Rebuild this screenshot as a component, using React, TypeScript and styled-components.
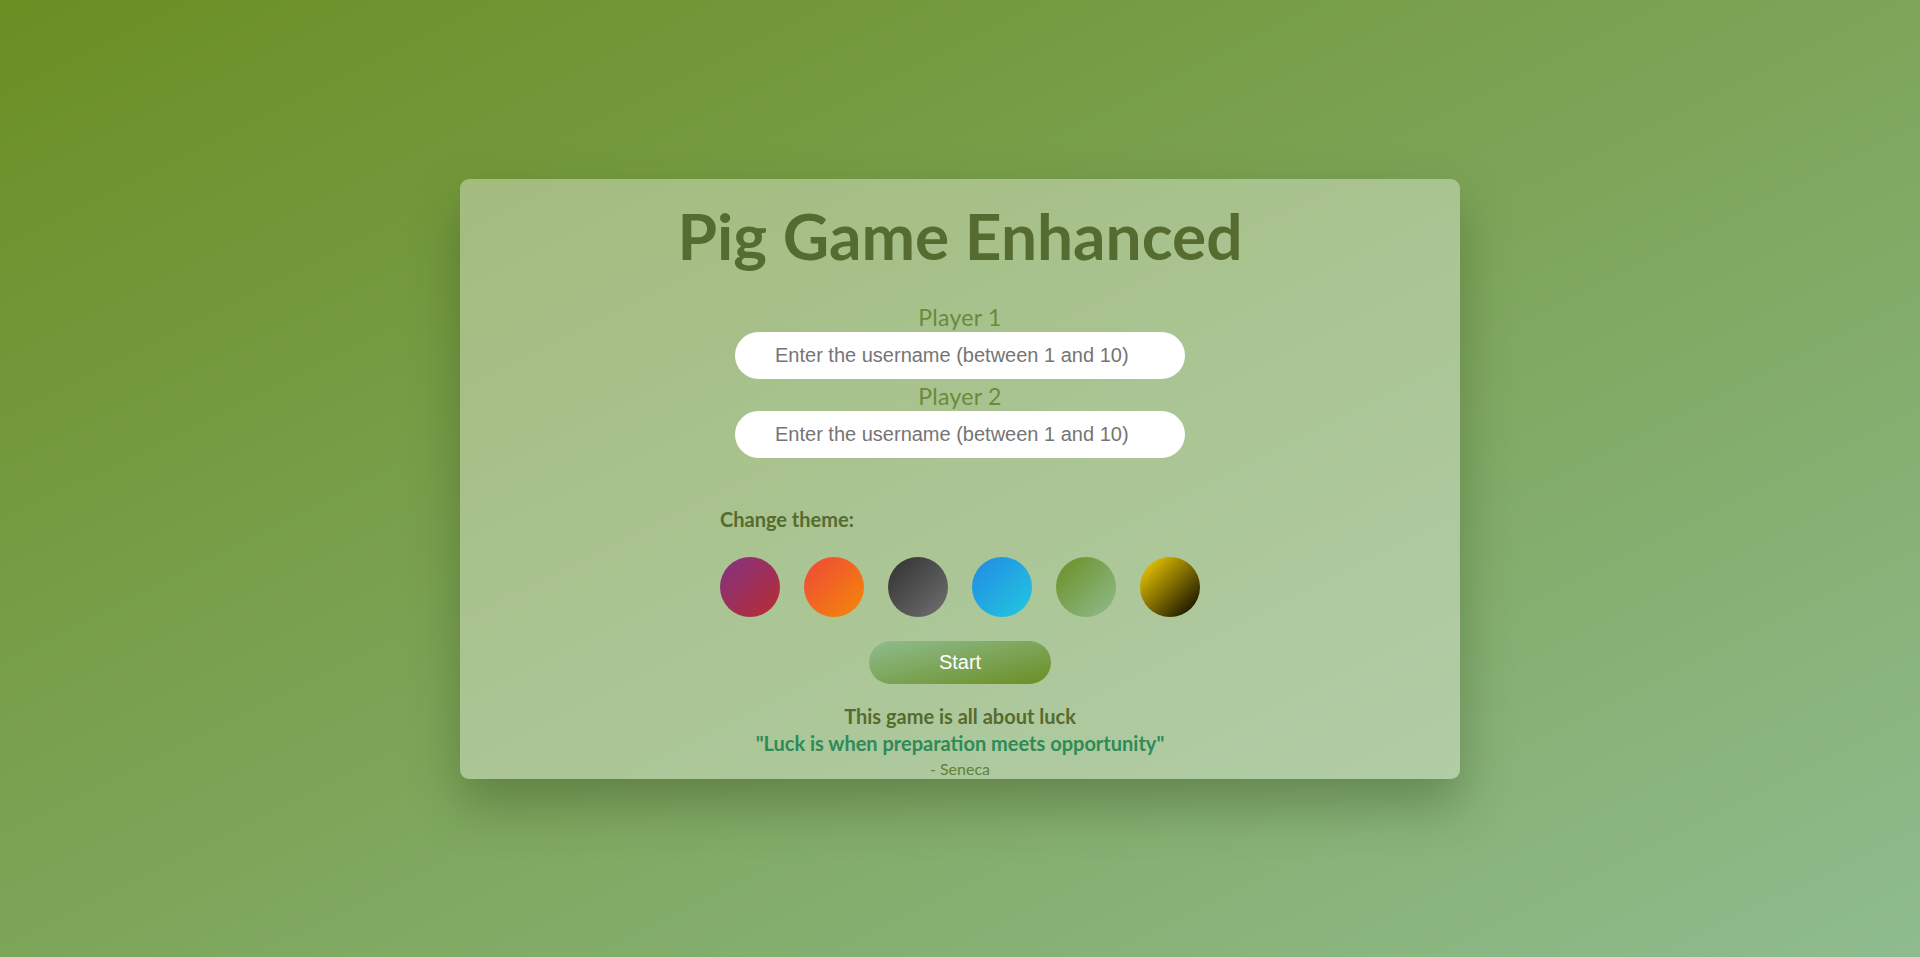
import React, { useState } from "react";
import styled, { createGlobalStyle } from "styled-components";

const GlobalStyle = createGlobalStyle`
  html, body {
    margin: 0;
    height: 100%;
  }
  body {
    font-family: "Lato", "Noto Sans", sans-serif;
    background: linear-gradient(to bottom right, #6b8e23, #8fbc8f);
  }
  #root {
    height: 100%;
  }
`;

const THEMES = [
  { id: "royal", from: "#823385", to: "#b92c30" },
  { id: "sunset", from: "#ef473a", to: "#f48907" },
  { id: "night", from: "#303030", to: "#717171" },
  { id: "ocean", from: "#2189e2", to: "#23c9e0" },
  { id: "forest", from: "#6b8e23", to: "#8fbc8f" },
  { id: "gold", from: "#ffd700", to: "#000000" },
];

const Page = styled.div`
  min-height: 100%;
  display: flex;
  align-items: center;
  justify-content: center;
`;

const Card = styled.div`
  width: 1000px;
  height: 600px;
  box-sizing: border-box;
  padding-top: 18px;
  border-radius: 9px;
  background: rgba(255, 255, 255, 0.35);
  box-shadow: 0 25px 50px rgba(40, 60, 20, 0.35);
  display: flex;
  flex-direction: column;
  align-items: center;
`;

const Title = styled.h1`
  margin: 0 0 28px;
  font-size: 64px;
  font-weight: 700;
  line-height: normal;
  color: #556b2f;
`;

const Field = styled.div`
  display: flex;
  flex-direction: column;
  align-items: center;
  margin-bottom: 2px;
`;

const PlayerLabel = styled.label`
  font-size: 23px;
  font-weight: 400;
  letter-spacing: 0.3px;
  line-height: 30px;
  color: #6a8a3c;
`;

const NameInput = styled.input`
  width: 450px;
  height: 47px;
  box-sizing: border-box;
  padding: 0 20px 0 40px;
  border: none;
  border-radius: 24px;
  background: #fff;
  font-family: "Liberation Sans", Arial, sans-serif;
  font-size: 20px;
  outline: none;

  &::placeholder {
    color: #757575;
  }
`;

const ThemeBlock = styled.div`
  width: 480px;
  margin-top: 47px;
  display: flex;
  flex-direction: column;
`;

const ThemeLabel = styled.div`
  font-size: 20px;
  font-weight: 700;
  line-height: normal;
  color: #556b2f;
  margin-bottom: 26px;
`;

const Swatches = styled.div`
  display: flex;
  gap: 24px;
`;

const Swatch = styled.button<{ $from: string; $to: string }>`
  width: 60px;
  height: 60px;
  padding: 0;
  border: none;
  border-radius: 50%;
  cursor: pointer;
  background: linear-gradient(to bottom right, ${(p) => p.$from}, ${(p) => p.$to});
`;

const StartButton = styled.button`
  margin-top: 24px;
  width: 182px;
  height: 43px;
  border: none;
  border-radius: 22px;
  background: linear-gradient(to bottom right, #8fbc8f, #6b8e23);
  color: #fff;
  font-family: "Liberation Sans", Arial, sans-serif;
  font-size: 20px;
  cursor: pointer;
`;

const Footer = styled.div`
  margin-top: 19px;
  display: flex;
  flex-direction: column;
  align-items: center;
`;

const Tagline = styled.div`
  font-size: 20px;
  font-weight: 700;
  line-height: 27px;
  color: #556b2f;
`;

const Quote = styled.div`
  font-size: 20px;
  font-weight: 700;
  line-height: 27px;
  color: #2e8b57;
`;

const Author = styled.div`
  margin-top: 2px;
  font-size: 16px;
  line-height: normal;
  color: #62813a;
`;

const App = () => {
  const [player1, setPlayer1] = useState("");
  const [player2, setPlayer2] = useState("");
  const [theme, setTheme] = useState("forest");

  return (
    <>
      <GlobalStyle />
      <Page>
        <Card data-theme={theme}>
          <Title>Pig Game Enhanced</Title>

          <Field>
            <PlayerLabel htmlFor="player1">Player 1</PlayerLabel>
            <NameInput
              id="player1"
              value={player1}
              maxLength={10}
              placeholder="Enter the username (between 1 and 10)"
              onChange={(e) => setPlayer1(e.target.value)}
            />
          </Field>
          <Field>
            <PlayerLabel htmlFor="player2">Player 2</PlayerLabel>
            <NameInput
              id="player2"
              value={player2}
              maxLength={10}
              placeholder="Enter the username (between 1 and 10)"
              onChange={(e) => setPlayer2(e.target.value)}
            />
          </Field>

          <ThemeBlock>
            <ThemeLabel>Change theme:</ThemeLabel>
            <Swatches>
              {THEMES.map((t) => (
                <Swatch
                  key={t.id}
                  $from={t.from}
                  $to={t.to}
                  aria-label={t.id}
                  onClick={() => setTheme(t.id)}
                />
              ))}
            </Swatches>
          </ThemeBlock>

          <StartButton>Start</StartButton>

          <Footer>
            <Tagline>This game is all about luck</Tagline>
            <Quote>"Luck is when preparation meets opportunity"</Quote>
            <Author>- Seneca</Author>
          </Footer>
        </Card>
      </Page>
    </>
  );
};

export default App;
